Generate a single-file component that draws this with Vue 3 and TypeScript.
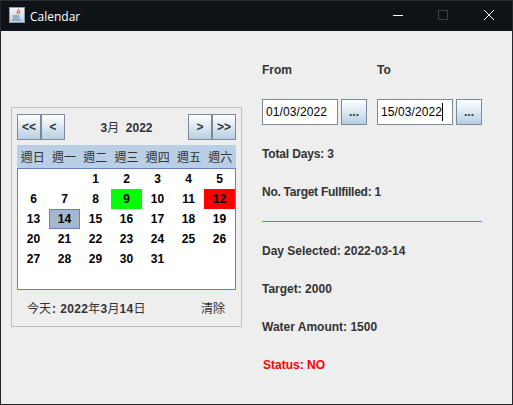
<script setup lang="ts">
const weekDays = ['週日', '週一', '週二', '週三', '週四', '週五', '週六']

interface DayCell {
  label: string
  kind?: 'hit' | 'miss' | 'today'
}

const marks: Record<number, DayCell['kind']> = { 9: 'hit', 12: 'miss', 14: 'today' }

const cells: DayCell[] = [{ label: '' }, { label: '' }]
for (let d = 1; d <= 31; d++) {
  cells.push({ label: String(d), kind: marks[d] })
}
</script>

<template>
  <div class="window">
    <header class="titlebar">
      <svg class="app-icon" width="16" height="16" viewBox="0 0 16 16">
        <defs>
          <linearGradient id="iconBg" x1="0" y1="0" x2="0" y2="1">
            <stop offset="0" stop-color="#f4f7fb" />
            <stop offset="1" stop-color="#bccfe2" />
          </linearGradient>
        </defs>
        <rect x="0.5" y="0.5" width="15" height="15" fill="url(#iconBg)" stroke="#8a9cb0" />
        <path d="M9.5 2c1 1.5-2.5 2.5-1.2 4.8M11 4c.4 1-1.5 1.5-.9 3" fill="none" stroke="#d8602a" stroke-width="1.2" />
        <path d="M3.5 8.5h7v1h-7zM4 10.5h6.5v1H4zM3 12.5h9v1H3z" fill="#5f7f9f" />
      </svg>
      <span class="title">Calendar</span>
      <div class="controls">
        <svg width="46" height="30" viewBox="0 0 46 30">
          <path d="M19 14.5h10" stroke="#fff" stroke-width="1" />
        </svg>
        <svg width="46" height="30" viewBox="0 0 46 30">
          <rect x="18.5" y="9.5" width="9" height="9" fill="none" stroke="#3c4043" />
        </svg>
        <svg width="46" height="30" viewBox="0 0 46 30">
          <path d="M18 9l10 10M28 9L18 19" stroke="#fff" stroke-width="1" />
        </svg>
      </div>
    </header>

    <main class="content">
      <section class="calendar">
        <div class="nav">
          <button class="btn nav-btn">&lt;&lt;</button>
          <button class="btn nav-btn">&lt;</button>
          <span class="month">3<span class="thin">月</span>&nbsp; 2022</span>
          <button class="btn nav-btn">&gt;</button>
          <button class="btn nav-btn">&gt;&gt;</button>
        </div>
        <div class="weekdays">
          <span v-for="w in weekDays" :key="w">{{ w }}</span>
        </div>
        <div class="days">
          <span
            v-for="(c, i) in cells"
            :key="i"
            class="day"
            :class="c.kind"
          >{{ c.label }}</span>
        </div>
        <div class="cal-foot">
          <span class="today-text">今天<b class="colon">:</b><b>2022</b>年<b>3</b>月<b>14</b>日</span>
          <span class="clear">清除</span>
        </div>
      </section>

      <section class="side">
        <div class="range-labels">
          <span class="label range-label">From</span>
          <span class="label">To</span>
        </div>
        <div class="range-inputs">
          <div class="date-field">
            <div class="input">01/03/2022</div>
            <button class="btn pick">...</button>
          </div>
          <div class="date-field">
            <div class="input">15/03/2022<i class="caret"></i></div>
            <button class="btn pick">...</button>
          </div>
        </div>
        <div class="label total">Total Days: 3</div>
        <div class="label fulfilled">No. Target Fullfilled: 1</div>
        <div class="divider"></div>
        <div class="label selected">Day Selected: 2022-03-14</div>
        <div class="label row">Target: 2000</div>
        <div class="label row">Water Amount: 1500</div>
        <div class="label row status">Status: NO</div>
      </section>
    </main>
  </div>
</template>

<style>
html,
body {
  margin: 0;
  background: #eeeeee;
}
</style>

<style scoped>
.window {
  width: 513px;
  height: 405px;
  box-sizing: border-box;
  border: 1px solid #23272b;
  border-top-color: #2a2e32;
  display: flex;
  flex-direction: column;
  background: #eeeeee;
  font-family: "Liberation Sans", "Noto Sans CJK TC", sans-serif;
  overflow: hidden;
}

.titlebar {
  height: 30px;
  flex-shrink: 0;
  background: #0f1317;
  display: flex;
  align-items: center;
  padding-left: 8px;
  color: #fff;
}

.app-icon {
  margin-right: 5px;
  margin-bottom: 2px;
}

.title {
  font-size: 12px;
  font-family: "Open Sans", "Liberation Sans", sans-serif;
}

.controls {
  margin-left: auto;
  display: flex;
  height: 30px;
}

.content {
  flex: 1;
  display: flex;
  align-items: flex-start;
}

.calendar {
  box-sizing: border-box;
  width: 231px;
  height: 220px;
  margin: 76px 0 0 10px;
  padding: 6px 5px 0;
  border: 1px solid #c0c0c0;
  display: flex;
  flex-direction: column;
}

.btn {
  box-sizing: border-box;
  margin: 0;
  padding: 0;
  border: 1px solid #7a8a99;
  background: linear-gradient(#ffffff, #b8cfe5);
  color: #333333;
  font: bold 12px "Liberation Sans", sans-serif;
}

.nav {
  display: flex;
  align-items: center;
  height: 26px;
}

.nav-btn {
  width: 24px;
  height: 26px;
}

.month {
  flex: 1;
  padding-bottom: 2px;
  text-align: center;
  font-size: 12px;
  font-weight: bold;
  color: #333333;
}

.thin {
  font-weight: normal;
}

.weekdays {
  margin-top: 5px;
  height: 23px;
  background: #b8cfe5;
  display: grid;
  grid-template-columns: repeat(7, 1fr);
  align-items: center;
  text-align: center;
  font-size: 12px;
  color: #333333;
}

.days {
  box-sizing: border-box;
  height: 122px;
  background: #fff;
  border: 1px solid #6382bf;
  display: grid;
  grid-template-columns: repeat(7, 31px);
  grid-auto-rows: 20px;
  align-content: start;
}

.day {
  box-sizing: border-box;
  display: flex;
  align-items: center;
  justify-content: center;
  font-size: 12px;
  font-weight: bold;
  color: #000;
}

.day.hit {
  background: #00ff00;
}

.day.miss {
  background: #ff0000;
}

.day.today {
  background: #a3b8cc;
  border: 1px solid #6382bf;
}

.cal-foot {
  display: flex;
  justify-content: space-between;
  align-items: center;
  height: 34px;
  padding: 0 10px 2px 10px;
  font-size: 12px;
  color: #333333;
}

.today-text b {
  font-weight: bold;
  letter-spacing: 0.33px;
}

.today-text .colon {
  margin: 0 4px 0 1px;
}

.clear {
  margin-right: 1px;
}

.side {
  width: 220px;
  margin-left: 20px;
  display: flex;
  flex-direction: column;
}

.label {
  font-size: 12px;
  font-weight: bold;
  color: #333333;
  line-height: 14px;
}

.range-labels {
  display: flex;
  margin-top: 32px;
}

.range-label {
  width: 115px;
}

.range-inputs {
  display: flex;
  gap: 10px;
  margin-top: 22px;
}

.date-field {
  display: flex;
  gap: 3px;
}

.input {
  box-sizing: border-box;
  width: 76px;
  height: 26px;
  padding-left: 3px;
  border: 1px solid #7a8a99;
  background: #fff;
  display: flex;
  align-items: center;
  font-size: 12px;
  letter-spacing: 0.1px;
  color: #000;
}

.caret {
  width: 1px;
  height: 18px;
  background: #000;
}

.pick {
  width: 26px;
  height: 26px;
}

.total {
  margin-top: 22px;
  letter-spacing: -0.15px;
}

.fulfilled {
  margin-top: 24px;
  letter-spacing: -0.26px;
}

.divider {
  height: 1px;
  background: #6382bf;
  margin-top: 22px;
}

.selected {
  margin-top: 22px;
}

.row {
  margin-top: 24px;
}

.status {
  color: #ff0000;
  padding-left: 1px;
}
</style>
